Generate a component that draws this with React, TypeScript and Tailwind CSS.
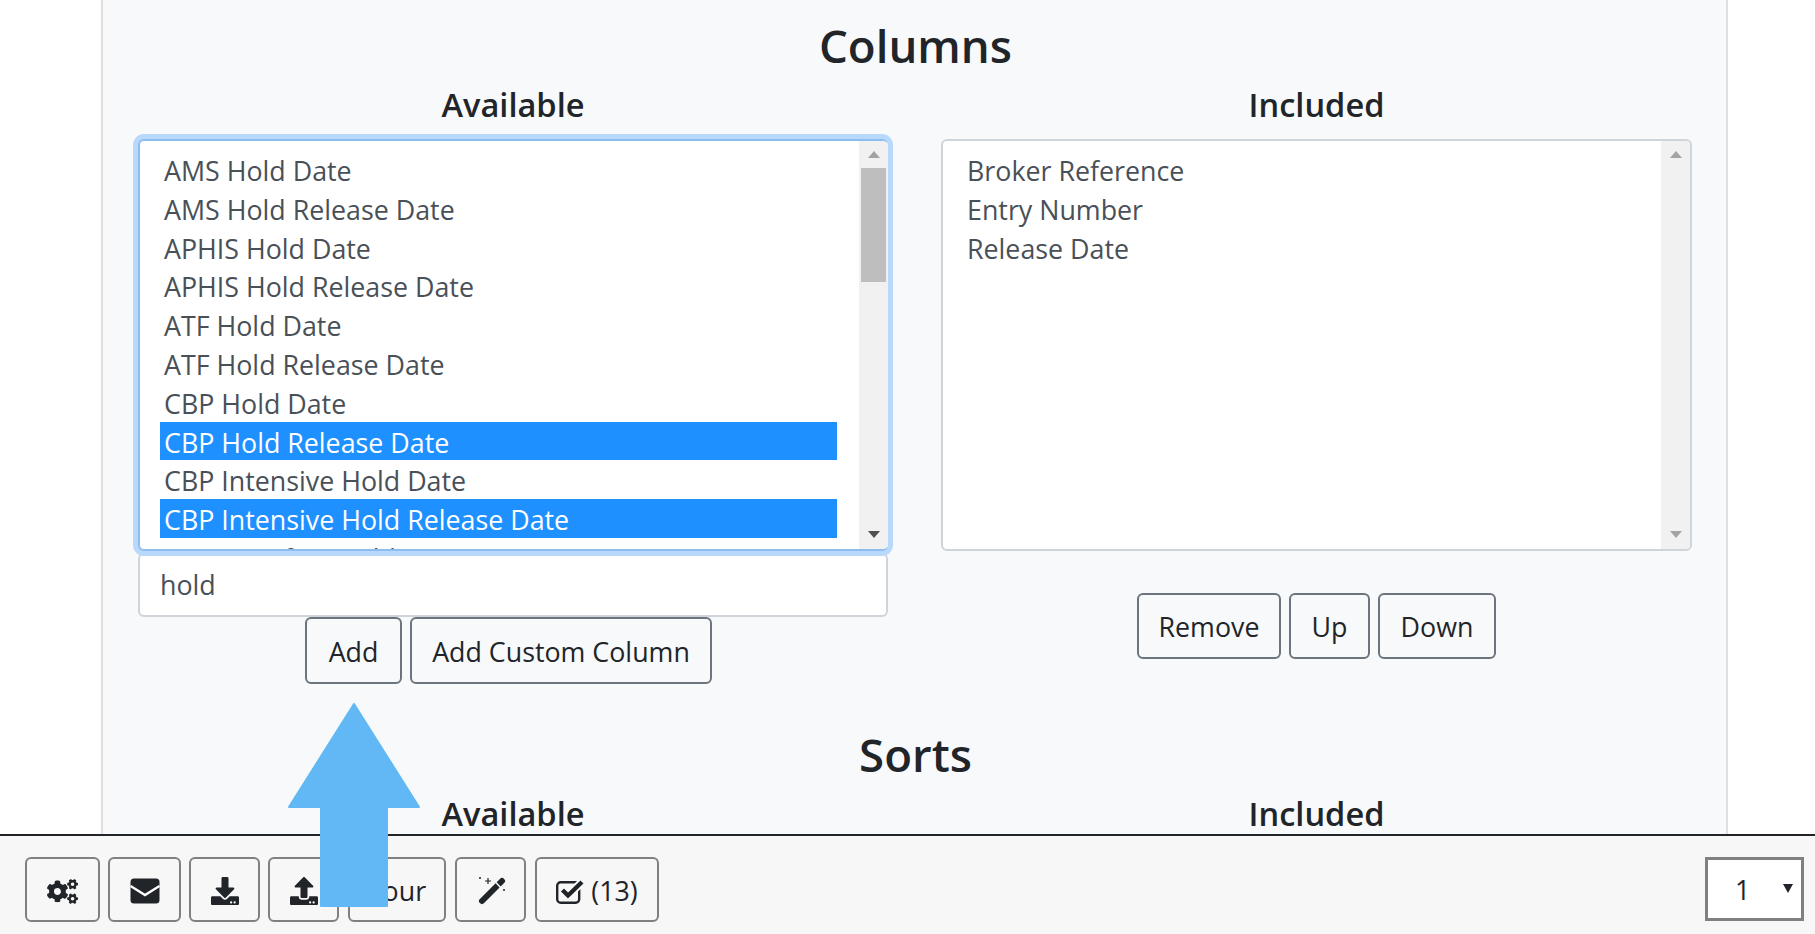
import { FaCogs, FaDownload, FaUpload } from 'react-icons/fa'

const FONT = "font-['Open_Sans','Noto_Sans',sans-serif]"
const TEXT = 'text-[26.8px]'
const SUBHEAD = 'text-center text-[32.6px] font-semibold leading-[42px] text-[#212529]'
const HEAD = 'pb-[2px] text-center text-[45.6px] font-semibold leading-[62px] text-[#212529]'

const available = [
  'AMS Hold Date',
  'AMS Hold Release Date',
  'APHIS Hold Date',
  'APHIS Hold Release Date',
  'ATF Hold Date',
  'ATF Hold Release Date',
  'CBP Hold Date',
  'CBP Hold Release Date',
  'CBP Intensive Hold Date',
  'CBP Intensive Hold Release Date',
  'CBP Manifest Hold Date',
]
const selected = ['CBP Hold Release Date', 'CBP Intensive Hold Release Date']
const included = ['Broker Reference', 'Entry Number', 'Release Date']

function Scrollbar({ thumb }: { thumb: boolean }) {
  return (
    <div className="flex w-[29px] shrink-0 flex-col items-center bg-[#f1f1f1]">
      <div className="mt-[10px] h-0 w-0 border-x-[6.5px] border-b-[7px] border-x-transparent border-b-[#a3a3a3]" />
      {thumb && <div className="mt-[10px] h-[114px] w-[25px] bg-[#bebebe]" />}
      <div className={`mb-[11px] mt-auto h-0 w-0 border-x-[6.5px] border-t-[7px] border-x-transparent ${thumb ? 'border-t-[#505050]' : 'border-t-[#a3a3a3]'}`} />
    </div>
  )
}

function ListBox({ items, active }: { items: string[]; active?: boolean }) {
  return (
    <div className={`relative z-10 flex h-[412px] overflow-hidden rounded-[6px] border-2 bg-white ${active ? 'border-[#8dbdf0] border-r-0 shadow-[0_0_0_5px_#b8d9fb]' : 'border-[#ced4da]'}`}>
      <div className="min-w-0 flex-1 pl-[20px] pr-[22px] pt-[9px]">
        {items.map((item) => (
          <div
            key={item}
            className={`h-[38.8px] whitespace-nowrap pl-[4px] ${TEXT} leading-[42px] ${selected.includes(item) && active ? 'bg-[#1e90ff] text-white' : 'text-[#495057]'}`}
          >
            {item}
          </div>
        ))}
      </div>
      <Scrollbar thumb={!!active} />
    </div>
  )
}

function Btn({ children, className = '' }: { children: React.ReactNode; className?: string }) {
  return (
    <button className={`flex items-center justify-center rounded-[6px] border-2 border-[#6c757d] pt-[3px] ${TEXT} text-[#212529] ${className}`}>
      {children}
    </button>
  )
}

function ToolBtn({ children, className = '' }: { children: React.ReactNode; className?: string }) {
  return (
    <button className={`flex h-[65px] items-center justify-center rounded-[6px] border-2 border-[#808080] pt-[3px] ${TEXT} text-[#212529] ${className}`}>
      {children}
    </button>
  )
}

function EnvelopeIcon() {
  return (
    <svg width="30" height="26" viewBox="0 0 30 26">
      <rect x="0.5" y="0.5" width="29" height="25" rx="3.5" fill="#212529" />
      <path d="M0.5 8 L15 17 L29.5 8" fill="none" stroke="#ffffff" strokeWidth="2.4" />
    </svg>
  )
}

function WandIcon() {
  return (
    <svg className="ml-[4px]" width="30" height="30" viewBox="0 0 30 30" fill="#212529">
      <path d="M4 25 L24 5" stroke="#212529" strokeWidth="6" strokeLinecap="round" />
      <path d="M18 6.5 L23 12" stroke="#ffffff" strokeWidth="1.4" />
      <path d="M7 5 h6 M10 2 v6" stroke="#212529" strokeWidth="1.2" />
      <path d="M1 2 h2 M2 1 v2" stroke="#212529" strokeWidth="1" />
      <path d="M25 14 h2 M26 13 v2" stroke="#212529" strokeWidth="1" />
    </svg>
  )
}

function CheckIcon() {
  return (
    <svg width="30" height="25" viewBox="0 0 30 25" fill="none">
      <rect x="1.2" y="3.2" width="22" height="20.6" rx="3.5" stroke="#212529" strokeWidth="2.4" />
      <path d="M6.5 11 L12 16.5 L26 3" stroke="#ffffff" strokeWidth="8" />
      <path d="M6.5 11 L12 16.5 L26 3" stroke="#212529" strokeWidth="4.4" />
    </svg>
  )
}

export default function App() {
  return (
    <div className={`relative flex h-[934px] flex-col overflow-hidden bg-white ${FONT}`}>
      <div className="ml-[101px] mr-[87px] min-h-0 flex-1 overflow-hidden border-x-2 border-[#dfdfdf] bg-[#f8f9fa] pl-[35px] pr-[33px]">
        <h2 className={`pt-[14px] ${HEAD}`}>Columns</h2>
        <div className="flex gap-[53px]">
          <div className="w-[750px] shrink-0">
            <h4 className={`mb-[13px] pt-[6px] ${SUBHEAD}`}>Available</h4>
            <ListBox items={available} active />
            <div className={`mt-[2px] flex h-[64px] items-center rounded-[6px] border-2 border-[#ced4da] bg-white pl-[20px] ${TEXT} text-[#495057]`}>hold</div>
            <div className="flex justify-center gap-[8px] pr-[9px]">
              <Btn className="h-[67px] w-[97px]">Add</Btn>
              <Btn className="h-[67px] w-[302px]">Add Custom Column</Btn>
            </div>
          </div>
          <div className="w-[751px] shrink-0">
            <h4 className={`mb-[13px] pt-[6px] ${SUBHEAD}`}>Included</h4>
            <ListBox items={included} />
            <div className="mt-[42px] flex justify-center gap-[8px]">
              <Btn className="h-[66px] w-[144px]">Remove</Btn>
              <Btn className="h-[66px] w-[81px]">Up</Btn>
              <Btn className="h-[66px] w-[118px]">Down</Btn>
            </div>
          </div>
        </div>
        <h2 className={`pt-[39px] ${HEAD}`}>Sorts</h2>
        <div className="flex gap-[53px] pt-[6px]">
          <h4 className={`w-[750px] shrink-0 ${SUBHEAD}`}>Available</h4>
          <h4 className={`w-[751px] shrink-0 ${SUBHEAD}`}>Included</h4>
        </div>
      </div>

      <div className="flex h-[100px] shrink-0 items-center justify-between border-t-2 border-[#212529] bg-[#f7f7f7] pl-[25px] pr-[11px] pt-[9px]">
        <div className="flex gap-[8px]">
          <ToolBtn className="w-[75px]"><FaCogs size={31} /></ToolBtn>
          <ToolBtn className="w-[73px]"><EnvelopeIcon /></ToolBtn>
          <ToolBtn className="w-[71px]"><FaDownload size={28} /></ToolBtn>
          <ToolBtn className="w-[71px]"><FaUpload size={28} /></ToolBtn>
          <ToolBtn className="ml-[1px] w-[98px]">Tour</ToolBtn>
          <ToolBtn className="ml-[1px] w-[71px]"><WandIcon /></ToolBtn>
          <ToolBtn className="ml-[1px] w-[124px] gap-[5px]"><CheckIcon />(13)</ToolBtn>
        </div>
        <div className={`relative mb-[2px] flex h-[64px] w-[99px] items-center border-[3px] border-[#808080] bg-white pl-[27px] pt-[3px] ${TEXT} text-[#212529]`}>
          1
          <div className="absolute right-[8px] top-[24px] h-0 w-0 border-x-[5px] border-t-[9px] border-x-transparent border-t-[#212529]" />
        </div>
      </div>

      <svg className="absolute left-[288px] top-[703px] z-20" width="132" height="204" viewBox="0 0 132 204">
        <path d="M66 1 L131 104 L99 104 L99 203 L33 203 L33 104 L1 104 Z" fill="#61b8f5" stroke="#61b8f5" strokeWidth="2" strokeLinejoin="round" />
      </svg>
    </div>
  )
}
